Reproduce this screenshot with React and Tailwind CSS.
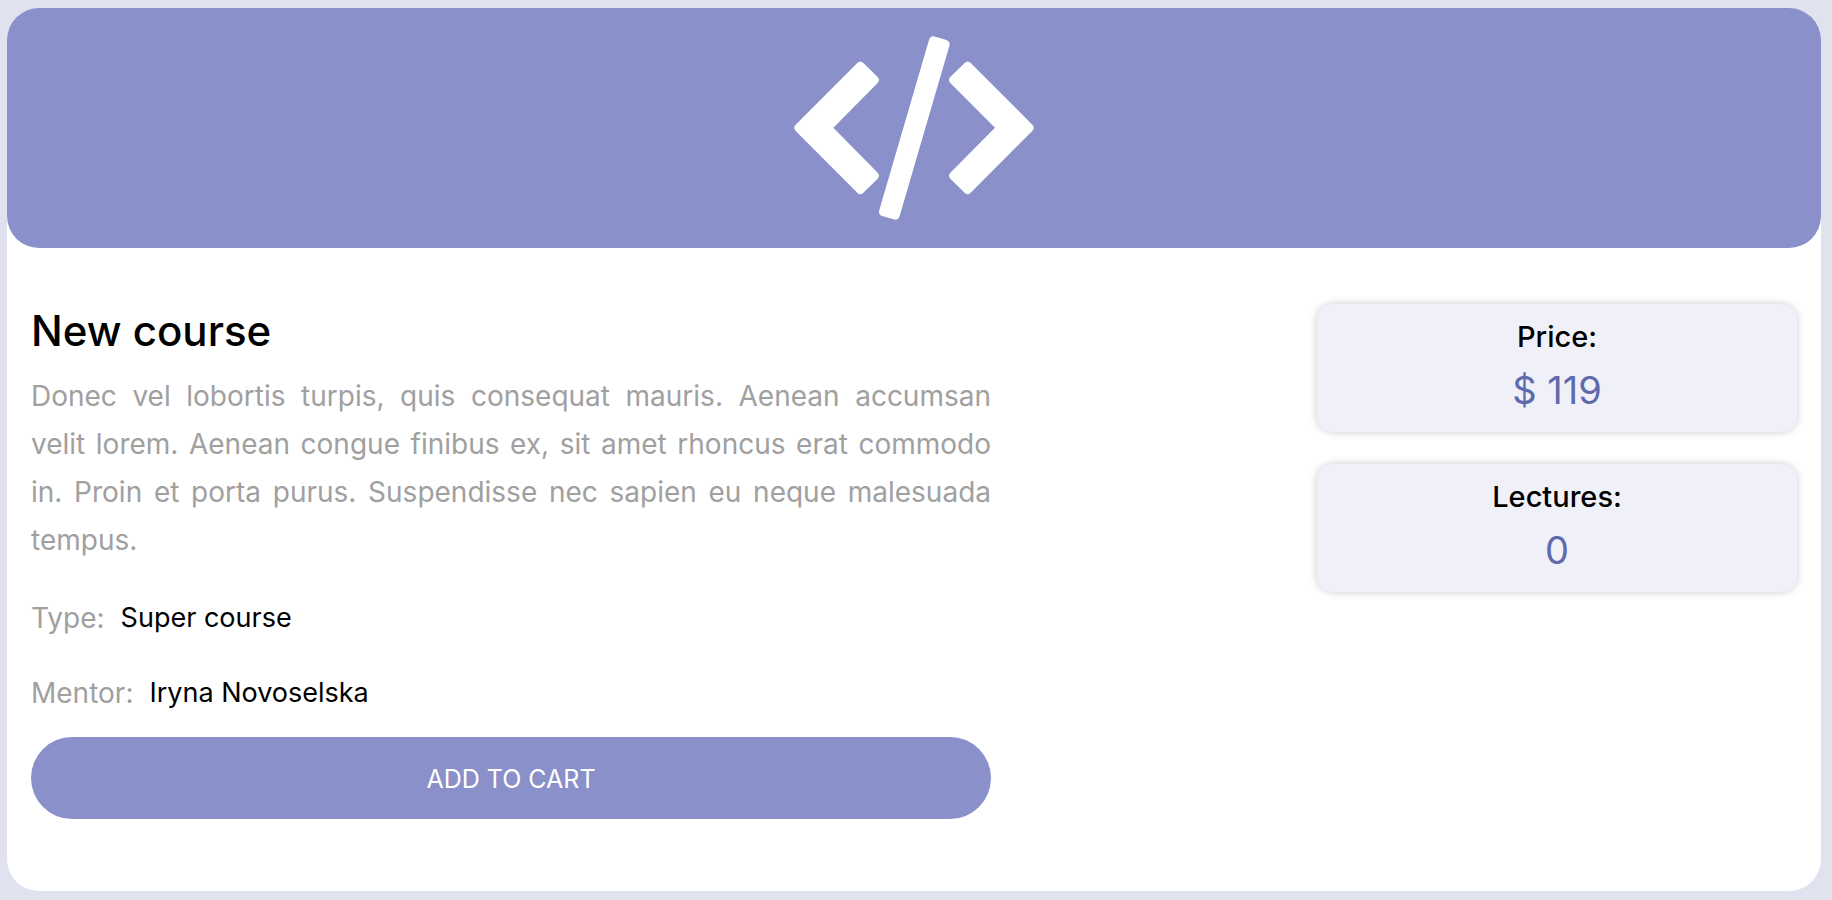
function CodeIcon() {
  return (
    <svg viewBox="42 48 720 552" className="h-[184px] w-[240px] fill-white" aria-hidden="true">
      <path d="M47 314L232 129Q241 120 250 129L293 171Q301 180 293 189L160 323L293 458Q301 467 293 476L250 518Q241 527 232 518L47 333Q38 323 47 314Z" />
      <path d="M757 314L572 129Q563 120 554 129L511 171Q503 180 511 189L645 323L511 458Q503 467 511 476L554 518Q563 527 572 518L757 333Q766 323 757 314Z" />
      <path d="M447 60Q451 46 466 50L497 59Q512 63 508 78L359 588Q355 602 340 598L309 589Q294 585 298 570Z" />
    </svg>
  );
}

function Detail({ label, value }) {
  return (
    <div className="flex items-center gap-4 leading-10">
      <dt className="text-[28px] text-[#a0a0a0]">{label}</dt>
      <dd className="text-[27px] text-black">{value}</dd>
    </div>
  );
}

function Stat({ label, value }) {
  return (
    <div className="rounded-2xl bg-[#eff0f8] pt-[13px] pb-[9px] text-center shadow-[0_0_8px_rgba(0,0,0,0.2)]">
      <dt className="text-[29px] leading-10 font-medium text-black">{label}</dt>
      <dd className="text-[38px] leading-[66px] text-[#5f69ad]">{value}</dd>
    </div>
  );
}

export default function App() {
  return (
    <div className="flex min-h-screen flex-col bg-[#e0e2f0] pt-2 pr-[11px] pb-[9px] pl-[7px] font-['Inter',sans-serif]">
      <main className="grow rounded-[32px] bg-white">
        <header className="flex h-60 items-center justify-center rounded-[32px] bg-[#8a90c9]">
          <CodeIcon />
        </header>
        <div className="flex items-start justify-between gap-12 px-6 pt-14 pb-[72px]">
          <section className="w-full max-w-[960px]">
            <h1 className="text-[42px] leading-[54px] font-medium text-black">New course</h1>
            <p className="mt-[14px] text-justify text-[28px] leading-[48px] text-[#a0a0a0]">
              Donec vel lobortis turpis, quis consequat mauris. Aenean accumsan velit lorem. Aenean
              congue finibus ex, sit amet rhoncus erat commodo in. Proin et porta purus. Suspendisse
              nec sapien eu neque malesuada tempus.
            </p>
            <dl className="mt-[34px] flex flex-col gap-[35px]">
              <Detail label="Type:" value="Super course" />
              <Detail label="Mentor:" value="Iryna Novoselska" />
            </dl>
            <button
              type="button"
              className="mt-6 h-[82px] w-full rounded-full bg-[#8a90c9] pt-1 text-[25px] text-white uppercase"
            >
              Add to cart
            </button>
          </section>
          <dl className="flex w-[480px] shrink-0 flex-col gap-8">
            <Stat label="Price:" value="$ 119" />
            <Stat label="Lectures:" value="0" />
          </dl>
        </div>
      </main>
    </div>
  );
}
